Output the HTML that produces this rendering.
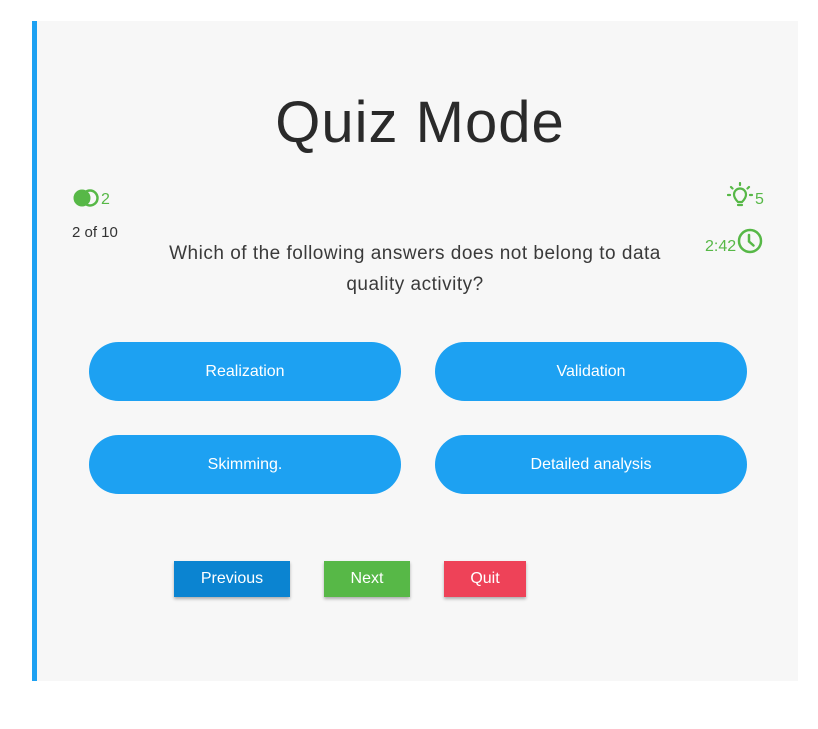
<!DOCTYPE html>
<html><head><meta charset="utf-8"><style>
*{margin:0;padding:0;box-sizing:border-box}
body{width:818px;height:729px;background:#fff;font-family:"Liberation Sans",sans-serif;position:relative;overflow:hidden}
.card{position:absolute;left:32px;top:21px;width:766px;height:660px;background:#f7f7f7;border-left:5px solid #1da1f2}
.abs{position:absolute}
h1{position:absolute;left:0;width:766px;top:68px;text-align:center;font-weight:normal;font-size:58px;color:#2a2a2a;letter-spacing:1px}
.q{position:absolute;left:113px;width:530px;top:217px;text-align:center;font-size:19px;letter-spacing:.5px;line-height:31px;color:#3a3a3a}
.ans{position:absolute;width:312px;height:59px;border-radius:30px;background:#1da1f2;color:#fff;font-size:16px;display:flex;align-items:center;justify-content:center}
.nav{position:absolute;top:540px;height:36px;color:#fff;font-size:16px;display:flex;align-items:center;justify-content:center;box-shadow:0 2px 3px rgba(0,0,0,.3)}
.g{color:#57b847;font-size:16px}
</style></head><body>
<div class="card">
<h1>Quiz Mode</h1>
<svg class="abs" style="left:36px;top:168px" width="28" height="18" viewBox="0 0 28 18"><circle cx="9" cy="9" r="7.5" fill="#57b847" stroke="#57b847" stroke-width="2"/><circle cx="17" cy="9" r="7.5" fill="none" stroke="#57b847" stroke-width="2.5"/></svg>
<div class="abs g" style="left:64px;top:170px">2</div>
<div class="abs" style="left:35px;top:203px;font-size:15px;color:#333">2 of 10</div>
<svg class="abs" style="left:690px;top:161px" width="30" height="30" viewBox="0 0 30 30"><g stroke="#57b847" stroke-width="2.2" fill="none" stroke-linecap="round"><path d="M11 20 C8 17 7 15 7 12.5 a6 6 0 0 1 12 0 C19 15 18 17 15 20 Z"/><path d="M11 23h4"/><path d="M13 1v2M4 5l1.5 1.5M22 5l-1.5 1.5M1 13h2M23 13h2"/></g></svg>
<div class="abs g" style="left:718px;top:170px">5</div>
<div class="abs g" style="left:668px;top:217px">2:42</div>
<svg class="abs" style="left:700px;top:207px" width="26" height="26" viewBox="0 0 26 26"><circle cx="13" cy="13" r="11" fill="none" stroke="#57b847" stroke-width="2.5"/><path d="M12 7v6.5l4.5 4" fill="none" stroke="#57b847" stroke-width="2.5" stroke-linecap="round"/></svg>
<div class="q">Which of the following answers does not belong to data quality activity?</div>
<div class="ans" style="left:52px;top:321px">Realization</div>
<div class="ans" style="left:398px;top:321px">Validation</div>
<div class="ans" style="left:52px;top:414px">Skimming.</div>
<div class="ans" style="left:398px;top:414px">Detailed analysis</div>
<div class="nav" style="left:137px;width:116px;background:#0b84d1">Previous</div>
<div class="nav" style="left:287px;width:86px;background:#57b847">Next</div>
<div class="nav" style="left:407px;width:82px;background:#ee4258">Quit</div>
</div>
</body></html>
